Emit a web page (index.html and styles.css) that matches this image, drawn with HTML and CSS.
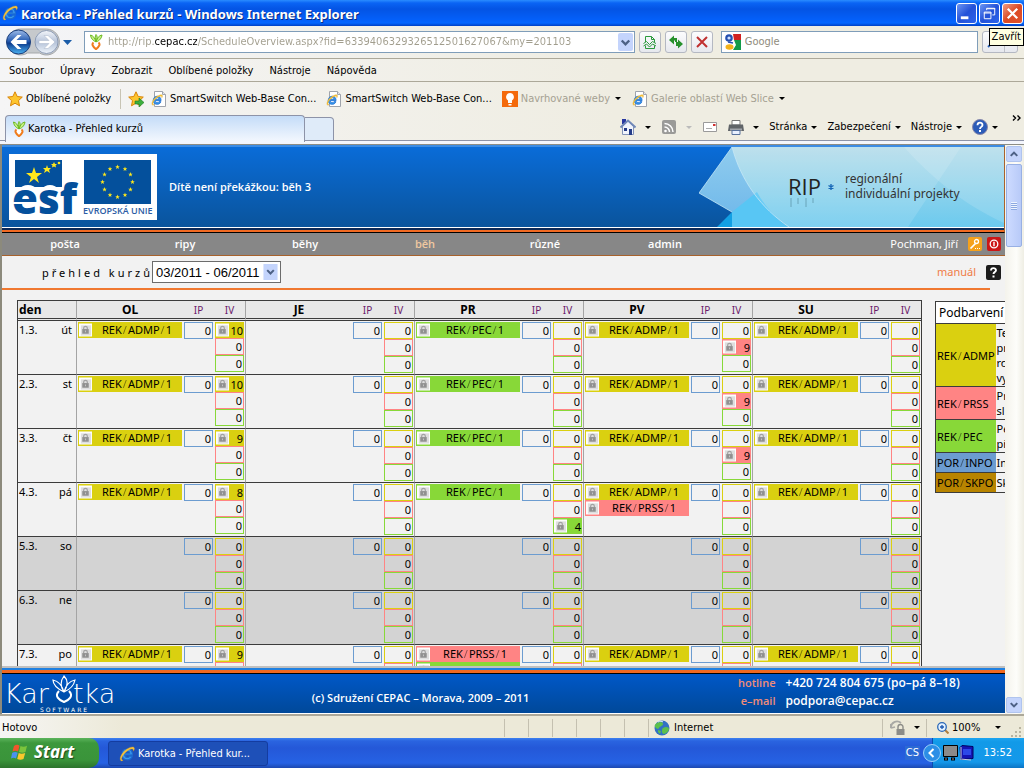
FILE: index.html
```html
<!DOCTYPE html>
<html lang="cs">
<head>
<meta charset="utf-8">
<title>Karotka - Přehled kurzů</title>
<link rel="stylesheet" href="styles.css">
</head>
<body>
<svg class="defs" aria-hidden="true">
  <defs>
    <linearGradient id="gBack" x1="0" y1="0" x2="0" y2="1"><stop offset="0" stop-color="#9dbbe8"/><stop offset=".45" stop-color="#2a5fb4"/><stop offset=".55" stop-color="#0d3c8e"/><stop offset="1" stop-color="#4cb4f4"/></linearGradient>
    <linearGradient id="gFwd" x1="0" y1="0" x2="0" y2="1"><stop offset="0" stop-color="#f4f6fa"/><stop offset=".5" stop-color="#b4c2d8"/><stop offset="1" stop-color="#eef4fb"/></linearGradient>
    <symbol id="ie" viewBox="0 0 16 16"><path d="M13.4 8.9H5.6c.2 1.700 1.300 2.600 2.800 2.600 1 0 1.800-.4 2.300-1.300h2.500c-.8 2.300-2.500 3.500-4.900 3.500-3.100 0-5.300-2-5.300-5.200C3 5.200 5.200 3 8.300 3c3.200 0 5.300 2.200 5.100 5.900zM5.700 7.200h5.100C10.700 5.800 9.700 5 8.300 5S5.900 5.800 5.700 7.200z" fill="#3a9cf0" stroke="#1c6cd0" stroke-width="1.100"/><path d="M2.200 15C-.6 13.200 2.600 6.500 8 3c3.500-2.300 7-2.900 7.400-.8.2 1-.5 2.300-1 3 .1-1.400-.3-2.200-1.700-2.200C9.500 3 3.600 8.600 2.700 12c-.3 1.500.3 2 1.500 1.900-.6.700-1.400 1.300-2 1.100z" fill="#f6c23c" stroke="#d8a020" stroke-width=".3"/></symbol>
    <symbol id="iepage" viewBox="0 0 16 16"><path d="M3.500.5h8l3 3v12h-11z" fill="#fff" stroke="#a0a4ac"/><path d="M11.500.5v3h3" fill="#e4e6ea" stroke="#a0a4ac"/><use href="#ie" x="0" y="3" width="12" height="12"/></symbol>
    <symbol id="carrot" viewBox="0 0 16 16"><path d="M8 8C4 6 3 4 2.500 1 5 1.500 7 4 8 8 7 4 7 2 8 .5 9.500 2 9.500 4 8 8c1-4 3-6.500 6-7-.5 3-2 5.500-6 7z" fill="#c8f088" stroke="#6cba22"/><path d="M5.500 8.500C3.500 10 4.500 12.500 8 15.200c3.500-2.700 4.500-5 2.500-6.700" fill="#fff" stroke="#f07c1c" stroke-width="2"/></symbol>
    <symbol id="star" viewBox="0 0 16 16"><path d="M8 .8l2.200 4.700 5.100.6-3.800 3.500 1 5.200L8 12.200l-4.500 2.600 1-5.200L.7 6.100l5.100-.6z" fill="#fdc52e" stroke="#d98408"/></symbol>
    <symbol id="lock" viewBox="0 0 14 14"><path fill="#fdfdfd" d="M0 0h14v14H0z"/><path fill="#dedede" d="M2 2h11v11H2z"/><path d="M5 6.500V5a2 2 0 0 1 4 0v1.500" fill="none" stroke="#a2a2a2" stroke-width="1.300"/><path fill="#909090" d="M3.500 6h7v5h-7z"/><path fill="#c8c8c8" d="M6.500 7.500h1v2h-1z"/></symbol>
  </defs>
</svg>

<header class="titlebar">
  <svg class="i16"><use href="#ie"/></svg>
  <h1>Karotka - Přehled kurzů - Windows Internet Explorer</h1>
  <button class="win" aria-label="Minimalizovat"><svg viewBox="0 0 20 20"><path fill="#fff" d="M4 13h8v3H4z"/></svg></button>
  <button class="win" aria-label="Obnovit"><svg viewBox="0 0 20 20" fill="none" stroke="#fff"><path d="M7 6.500V4.500h8.500v7H13M7 5h9"/><path d="M4.500 8.500h7v7h-7zM4 9.500h8"/></svg></button>
  <button class="win close" aria-label="Zavřít"><svg viewBox="0 0 20 20" stroke="#fff" stroke-width="2.400"><path d="M5 5l10 10M15 5L5 15"/></svg></button>
  <div class="tooltip" role="tooltip">Zavřít</div>
</header>

<div class="navbar">
  <svg class="backfwd" viewBox="0 0 76 30" role="img" aria-label="Zpět a vpřed">
    <path d="M17 2h26a13 13 0 1 1-7 24H24A13 13 0 1 1 17 2z" fill="#c6c9cc" stroke="#a5a8ab"/>
    <circle cx="15" cy="15" r="12" fill="url(#gBack)" stroke="#1c3f7c"/><path d="M7 15l7-7h4l-5 5h10v4H13l5 5h-4z" fill="#fff"/>
    <circle cx="43" cy="15" r="11.500" fill="url(#gFwd)" stroke="#8c9bb4"/><path d="M51.500 15l-7-6.500h-4l5 5h-10v3h10l-5 5h4z" fill="#fff" stroke="#a9b5c8" stroke-width=".5"/>
    <path d="M59.500 13h9L64 18z" fill="#1a5ca8"/>
  </svg>
  <div class="address">
    <svg class="i16"><use href="#carrot"/></svg>
    <input type="text" class="url" aria-label="Adresa" value="http://rip.cepac.cz/ScheduleOverview.aspx?fid=6339406329326512501627067&amp;my=201103">
    <button class="drop" aria-label="Rozbalit"><svg viewBox="0 0 14 18"><path d="M3.500 7L7 10.500 10.500 7" fill="none" stroke="#4d6185" stroke-width="2.200"/></svg></button>
  </div>
  <button class="tool" aria-label="Kompatibilní zobrazení"><svg viewBox="0 0 20 20" fill="none" stroke="#2b9a3c"><path d="M5.500 10V4.500h6l3 3V10M11.500 4.500v3h3M5.500 13.500v3h9v-3"/><path d="M3.500 11.500l3-2 3 3 3-3 3.500 2M3.500 14l3-2 3 3 3-3 3.500 2"/></svg></button>
  <button class="tool" aria-label="Obnovit"><svg viewBox="0 0 20 20" fill="#27912d"><path d="M3 8l5-4.500V6h3v4H9V8.500H8v4zM17 12l-5-4.500V10h-2v4h2v2.500z"/></svg></button>
  <button class="tool" aria-label="Zastavit"><svg viewBox="0 0 20 20" stroke="#c03030" stroke-width="2"><path d="M5 5l10 10M15 5L5 15"/></svg></button>
  <div class="search">
    <svg class="i16" viewBox="0 0 16 16"><path fill="#fff" d="M0 0h16v16H0z"/><path fill="#d02020" d="M8 0h8v6H9z"/><path fill="#129a48" d="M9 6h7v10H8l3-5z"/><circle cx="4" cy="4" r="3.800" fill="#2550b0"/><circle cx="4" cy="4" r="1.600" fill="#cfe0ff"/><ellipse cx="4.500" cy="13" rx="4" ry="2.800" fill="#f3b21a"/><path d="M3 8l5 1" stroke="#2550b0" stroke-width="1.500"/></svg>
    <input type="text" aria-label="Hledat" placeholder="Google">
  </div>
  <button class="tool find" aria-label="Hledat"><svg viewBox="0 0 34 20"><path d="M5 15l5-5" stroke="#2b62b8" stroke-width="2"/><path d="M21.500 0v20" stroke="#bfc2c8"/></svg></button>
</div>

<nav class="menubar">
  <button>Soubor</button><button>Úpravy</button><button>Zobrazit</button><button>Oblíbené položky</button><button>Nástroje</button><button>Nápověda</button>
</nav>

<div class="favbar">
  <button class="fav first"><svg class="i16"><use href="#star"/></svg>Oblíbené položky</button>
  <span class="sep"></span>
  <button class="fav add" aria-label="Přidat"><svg class="i16" viewBox="0 0 16 16"><use href="#star"/><path d="M7 10h4V7l5 4.500-5 4.500v-3H7z" fill="#3cae3c" stroke="#1d7a22" stroke-width=".6"/></svg></button>
  <button class="fav sw"><svg class="i16"><use href="#iepage"/></svg>SmartSwitch Web-Base Con...</button>
  <button class="fav sw"><svg class="i16"><use href="#iepage"/></svg>SmartSwitch Web-Base Con...</button>
  <button class="fav dim nav1"><svg class="i16" viewBox="0 0 16 16"><path fill="#f46a0c" d="M0 0h16v16H0z"/><path d="M8 2a4 4 0 0 1 2 7.400V12H6V9.400A4 4 0 0 1 8 2zM6.500 13h3v1.500h-3z" fill="#fff"/></svg>Navrhované weby<i class="caret"></i></button>
  <button class="fav dim"><svg class="i16"><use href="#iepage"/></svg>Galerie oblastí Web Slice<i class="caret"></i></button>
</div>

<div class="tabbar">
  <button class="tab"><svg class="i16"><use href="#carrot"/></svg>Karotka - Přehled kurzů</button>
  <button class="newtab" aria-label="Nová karta"></button>
  <div class="cmds">
    <button class="cmd" aria-label="Domů"><svg class="i16" viewBox="0 0 16 16"><path fill="#2838a0" d="M2 0h4v5H2z"/><path d="M2.500 7.500v8h11v-8L8 2z" fill="#f0f4fc" stroke="#8494b8"/><path d="M.5 8.500L8 1.500l7.500 7" fill="none" stroke="#7088b8" stroke-width="2"/><path fill="#243c88" d="M9 10h3v6H9zM4 9h3v3H4z"/></svg><i class="caret"></i></button>
    <button class="cmd" aria-label="Kanály"><svg class="i16" viewBox="0 0 16 16"><rect x="1" y="1" width="14" height="14" rx="2" fill="#9a9a98"/><path d="M3.500 8a5 5 0 0 1 5 5M3.500 4.500A8.500 8.500 0 0 1 12 13" fill="none" stroke="#fff" stroke-width="1.500"/><circle cx="4.500" cy="12" r="1.300" fill="#fff"/></svg><i class="caret off"></i></button>
    <button class="cmd mail" aria-label="Pošta"><svg class="i16" viewBox="0 0 16 16"><path d="M1.500 3.500h13v9h-13z" fill="#fff" stroke="#9a9a9a"/><path fill="#d03030" d="M11 5h2.500v2H11z"/><path d="M4 9.500h6" stroke="#aaa"/></svg></button>
    <button class="cmd" aria-label="Tisk"><svg class="i16" viewBox="0 0 16 16"><path fill="#fff" stroke="#777" d="M4 1.500h8V6H4z"/><path fill="#606468" d="M1 5.500h14L16 12H0z"/><path fill="#a0a4aa" d="M2 9.500h12v2H2z"/><path fill="#e8f0ff" stroke="#58729c" d="M4 11.500h8v4H4z"/></svg><i class="caret"></i></button>
    <button class="cmd">Stránka<i class="caret"></i></button>
    <button class="cmd">Zabezpečení<i class="caret"></i></button>
    <button class="cmd">Nástroje<i class="caret"></i></button>
    <button class="cmd help" aria-label="Nápověda"><svg class="i16" viewBox="0 0 16 16"><circle cx="8" cy="8" r="7.500" fill="#2c5cb8" stroke="#88a"/><path d="M5.500 6.200c0-3.400 5-3.200 5-.3C10.500 8 8 7.800 8 10" fill="none" stroke="#fff" stroke-width="1.800"/><path fill="#fff" d="M7 11h2v2H7z"/></svg><i class="caret"></i></button>
    <button class="more" aria-label="Další"><svg viewBox="0 0 10 6" fill="none" stroke="#000" stroke-width="1.400"><path d="M1 .5L3.500 3 1 5.500M5.500.5L8 3 5.500 5.500"/></svg></button>
  </div>
</div>

<main class="view">
  <div class="page">
    <div class="banner">
      <svg class="esf" viewBox="0 0 148 66" role="img" aria-label="ESF, Evropská unie">
        <path fill="#fff" d="M0 0h148v66H0z"/>
        <path fill="#04509c" d="M6 6h47v27H6z"/>
        <ellipse cx="19" cy="47" rx="14" ry="16" fill="#fff"/><ellipse cx="41" cy="47" rx="13" ry="16" fill="#fff"/>
        <text x="3" y="60" class="esf-t">esf</text>
        <path fill="#fff" d="M4 48h28v2H4z"/>
        <g fill="#ffe81c"><path d="M25 13l2 6h6l-5 4 2 6-5-4-5 4 2-6-5-4h6z"/><path d="M38 11l1 3h3l-2 2 1 3-3-2-3 2 1-3-2-2h3z"/><path d="M45 8l1 2h2l-1.500 1.500.5 2-2-1-2 1 .5-2L42 10h2z"/><circle cx="50" cy="9" r="1.300"/></g>
        <path fill="#04509c" d="M75 6h67v44H75z"/>
        <g fill="#ffe81c" id="eu"></g>
        <text x="74" y="60" class="eu-t">EVROPSKÁ UNIE</text>
      </svg>
      <strong>Dítě není překážkou: běh 3</strong>
      <svg class="rip" viewBox="0 0 305 80">
        <defs><linearGradient id="gr" x1="0" y1="0" x2="0" y2="1"><stop offset="0" stop-color="#b4dcea"/><stop offset="1" stop-color="#6ccaee"/></linearGradient><linearGradient id="gl" x1="0" y1="0" x2="0" y2="1"><stop offset="0" stop-color="#90ccee"/><stop offset="1" stop-color="#6cb6ea"/></linearGradient></defs>
        <path fill="url(#gr)" d="M33 0h272v80H33z"/>
        <path fill="url(#gl)" d="M33 0C42 34 62 61 90 80H33V65L0 46z"/>
        <path fill="#58c6f4" d="M33 65l25-20C66 60 78 72 90 80H33z"/><path fill="#12a0e4" d="M33 65v15H18z"/>
        <path d="M33 65L0 46 33 0c9 34 29 61 57 80" fill="none" stroke="#c2e6f6" stroke-width=".8"/>
        <path fill="#fff" opacity=".13" d="M205 0h57l-53 80H90C62 61 42 34 33 0z"/><path fill="#fff" opacity=".14" d="M205 0h100v76C265 58 232 30 205 0z"/>
        <text x="89" y="48" class="rip-t">RIP</text>
        <path d="M92 51v9M99 51v6M107 51v9M114 51v5" stroke="#386878" opacity=".45"/>
        <path d="M132 37v6M129.500 38.500l5 3M134.500 38.500l-5 3" stroke="#1868b8" stroke-width="1.400"/>
        <text x="146" y="36" class="rip-s">regionální</text><text x="146" y="51" class="rip-s">individuální projekty</text>
      </svg>
    </div>
    <nav class="sitenav">
      <a href="#">pošta</a><a href="#">ripy</a><a href="#">běhy</a><a href="#" class="on">běh</a><a href="#">různé</a><a href="#">admin</a>
      <span class="user">Pochman, Jiří</span>
      <button class="ico" aria-label="Změnit heslo"><svg viewBox="0 0 14 14"><rect width="14" height="14" rx="2" fill="#f5a11c"/><path d="M2.500 11.500L8 6" stroke="#fff" stroke-width="1.700"/><circle cx="8.500" cy="4.500" r="2" fill="none" stroke="#fff" stroke-width="1.300"/><path d="M7 11.500h5" stroke="#fff" stroke-dasharray="1 1"/></svg></button>
      <button class="ico" aria-label="Odhlásit"><svg viewBox="0 0 14 14"><rect width="14" height="14" rx="2" fill="#cc1616"/><circle cx="7" cy="7" r="3.800" fill="none" stroke="#fff" stroke-width="1.300"/><path d="M7 4.800v4.400" stroke="#fff" stroke-width="1.400"/></svg></button>
    </nav>
    <div class="subbar">
      <label for="period">přehled kurzů</label>
      <span class="pick"><select id="period"><option>03/2011 - 06/2011</option></select><svg viewBox="0 0 15 17"><path fill="#c4d4fc" d="M0 0h15v17H0z"/><path d="M4 6.500L7.500 10 11 6.500" fill="none" stroke="#4d6185" stroke-width="2.200"/></svg></span>
      <a href="#">manuál</a>
      <svg class="q" viewBox="0 0 15 15"><rect width="15" height="15" rx="2" fill="#1c1c1c"/><path d="M5 5.500c0-3.200 5-3 5-.3C10 7 7.500 7 7.500 9" fill="none" stroke="#fff" stroke-width="1.900"/><path fill="#fff" d="M6.500 10.500h2v2h-2z"/></svg>
    </div>
    <div class="content">
      <table class="plan">
        <colgroup><col class="c-day"><col class="c-name"></colgroup>
        <thead><tr id="head"><th colspan="2" class="den">den</th></tr></thead>
        <tbody id="days"></tbody>
      </table>
      <table class="legend">
        <colgroup><col class="c-code"><col></colgroup>
        <tr><th colspan="2">Podbarvení</th></tr>
        <tr><td class="y">REK<s>/</s>ADMP</td><td>Te<br>pr<br>ro<br>vy</td></tr>
        <tr><td class="r">REK<s>/</s>PRSS</td><td>Pr<br>sl</td></tr>
        <tr><td class="g">REK<s>/</s>PEC</td><td>Pe<br>př</td></tr>
        <tr><td class="b">POR<s>/</s>INPO</td><td>In</td></tr>
        <tr><td class="o">POR<s>/</s>SKPO</td><td>Sk</td></tr>
      </table>
    </div>
    <footer class="foot">
      <svg class="karotka" viewBox="0 0 112 40" role="img" aria-label="Karotka Software">
        <g fill="none" stroke="#fff" stroke-width="1.200"><path d="M60 18C52 14 49 10 49 6c5 1 9 5 11 12-4-6-3-12 0-16 4 4 4 10 0 16 2-8 6-11 11-12-1 5-4 9-11 12z"/><path d="M55 17c-5 5 0 9 5 11 5-2 10-6 5-11" stroke-width="2"/></g>
        <text x="0" y="29" class="k-t">Kar</text><text x="69" y="29" class="k-t">tka</text>
        <text x="36" y="38" class="k-s">S O F T W A R E</text>
      </svg>
      <span class="copy">(c) Sdružení CEPAC – Morava, 2009 – 2011</span>
      <dl><dt>hotline</dt><dd>+420 724 804 675 (po–pá 8–18)</dd><dt>e–mail</dt><dd>podpora@cepac.cz</dd></dl>
    </footer>
  </div>
  <div class="scroll">
    <button aria-label="Nahoru"><svg viewBox="0 0 15 15"><path d="M4 9.500L7.500 6 11 9.500" fill="none" stroke="#4d6185" stroke-width="2.200"/></svg></button>
    <div class="thumb"><i></i></div>
    <button class="down" aria-label="Dolů"><svg viewBox="0 0 15 15"><path d="M4 5.500L7.500 9 11 5.500" fill="none" stroke="#4d6185" stroke-width="2.200"/></svg></button>
  </div>
</main>

<div class="status">
  <span class="msg">Hotovo</span>
  <span class="cell"></span><span class="cell"></span><span class="cell"></span><span class="cell"></span><span class="cell"></span><span class="cell"></span>
  <span class="zone"><svg class="i16" viewBox="0 0 16 16"><circle cx="8" cy="8" r="7.500" fill="#3272c4"/><path d="M3 3c3-2 6-1 6 1S6 6 5 8 2 8 1 7s0-3 2-4zM9 8c3-2 6-1 6 1s-3 5-5 5-3-4-1-6zM4 10l3 1-1 3-2-2z" fill="#5cc04c"/><path d="M4 2c2-1 4-1 5 0" stroke="#e4f4ff" fill="none"/></svg>Internet</span>
  <span class="prot"><svg class="i16" viewBox="0 0 16 16"><path d="M1 8a6 6 0 0 1 10-5M1 8l-1-4M1 8l4-1" fill="none" stroke="#a8a8a4" stroke-width="1.800"/><path d="M8 9V7a2.500 2.500 0 0 1 5 0v2" fill="none" stroke="#8c8c88" stroke-width="1.400"/><path fill="#8c8c88" d="M6.500 9h8v6h-8z"/></svg><i class="caret"></i></span>
  <span class="zoom"><svg class="i12" viewBox="0 0 12 12"><path d="M8 8l3.500 3.500" stroke="#b08040" stroke-width="2"/><circle cx="5" cy="5" r="4.300" fill="#e4f2ff" stroke="#2a68b8" stroke-width="1.300"/><path d="M5 3v4M3 5h4" stroke="#1c58b0" stroke-width="1.300"/></svg>100%<i class="caret"></i></span>
  <svg class="grip" viewBox="0 0 12 12" fill="#b8b4a0"><path d="M9 1h2v2H9zM5 5h2v2H5zM9 5h2v2H9zM1 9h2v2H1zM5 9h2v2H5zM9 9h2v2H9z"/></svg>
</div>

<footer class="taskbar">
  <button class="start"><svg viewBox="0 0 18 18"><path d="M3 3c2-1.500 4-1.500 5.500-.3L7 8.500C5.500 7.500 3.500 7.500 1.500 8.500z" fill="#f0562c"/><path d="M9.500 3c2 1 4 1 6.500-.2L14.500 9c-2 1-4 1-6.500 0z" fill="#7cc43c"/><path d="M1.200 9.700C3.200 8.700 5.200 8.700 6.700 9.700L5 15.500C3.500 14.500 1.500 14.500 0 15.500z" fill="#4a92ee"/><path d="M7.700 10c2 1 4 1 6.500 0l-1.700 6c-2 1-4 1-6.300 0z" fill="#fbc82c"/></svg>Start</button>
  <button class="task"><svg class="i16"><use href="#ie"/></svg>Karotka - Přehled kur...</button>
  <span class="lang">CS</span>
  <div class="tray">
    <svg class="hide" viewBox="0 0 18 18"><circle cx="9" cy="9" r="8.500" fill="#2c8ee6" stroke="#9cd0f8"/><path d="M10.500 5L6.500 9l4 4" fill="none" stroke="#fff" stroke-width="2"/></svg>
    <svg class="i16" viewBox="0 0 16 16"><path fill="#8a8a8a" stroke="#000" d="M1.500.5h14v11h-14z"/><path d="M2 14h4M9 14h4" stroke="#000" stroke-width="3"/><path d="M3 14h2M10 14h2" stroke="#999"/></svg>
    <svg class="i16" viewBox="0 0 16 16"><path fill="#1414b4" stroke="#000060" d="M3 .5l11 1v12l-12 1-1-12z"/><path fill="#2c48e8" d="M4 4h8v6H4z"/><path d="M1 14l11 1M2 2v11" stroke="#ccd"/></svg>
    <time>13:52</time>
  </div>
</footer>
<script src="plan.js"></script>
</body>
</html>
```
FILE: styles.css
```css
* { box-sizing: border-box; }
html, body { height: 100%; }
body { margin: 0; display: flex; flex-direction: column; overflow: hidden; background: #f1efe4; color: #000; font: 11px/14px "DejaVu Sans Condensed", "Noto Sans", sans-serif; }
button { font: inherit; color: inherit; border: 0; padding: 0; margin: 0; background: none; white-space: nowrap; }
input, select { font: inherit; }
svg { display: block; flex: none; }
.defs { position: absolute; width: 0; height: 0; }
.i16 { width: 16px; height: 16px; }
.i12 { width: 12px; height: 12px; }
.caret { display: inline-block; border: 3px solid transparent; border-top-color: #000; border-bottom: 0; }
.caret.off { border-top-color: #bbb; }

.titlebar { position: relative; z-index: 2; flex: none; height: 26px; display: flex; align-items: center; gap: 2px; padding: 0 1px 0 2px; background: linear-gradient(#2a8cff 0, #0a64f4 3px, #0454e4 9px, #0460fa 20px, #0466ff 23px, #0040c4 26px); }
.titlebar h1 { flex: 1; margin: 0; padding: 1px 0 0 1px; color: #fff; font: bold 13px/16px "Noto Sans", sans-serif; text-shadow: 1px 1px 0 #0a2c80; white-space: nowrap; }
.win { width: 21px; height: 21px; border: 1px solid #fff; border-radius: 3px; background: linear-gradient(135deg, #6c96f4, #2452d8 50%, #2c64ec); }
.win.close { background: linear-gradient(135deg, #f09c84, #dc4a24 50%, #e0522c); }
.tooltip { position: absolute; right: 0; top: 28px; padding: 1px 2px; border: 1px solid #000; background: #ffffe1; }

.navbar { flex: none; height: 33px; display: flex; align-items: center; gap: 4px; padding: 0 6px 0 3px; background: linear-gradient(90deg, #f4f5f8, #efede2 60%); border-bottom: 1px solid #aca899; }
.backfwd { width: 77px; height: 30px; }
.address, .search { display: flex; align-items: center; gap: 4px; height: 22px; border: 1px solid #7f9db9; background: #fff; padding: 0 1px 0 3px; }
.address { flex: 555; min-width: 0; }
.search { flex: 256; min-width: 0; margin-left: 4px; }
.address input, .search input { flex: 1; min-width: 0; border: 0; padding: 0; outline: 0; color: #8f8b7c; background: none; font-family: "DejaVu Sans Condensed", sans-serif; }
.address .url { color: transparent; background: linear-gradient(90deg, #a19d8d 46px, #000 46px, #000 89px, #a19d8d 89px); -webkit-background-clip: text; background-clip: text; }
.search input::placeholder { color: #8f8b7c; }
.drop { width: 15px; height: 18px; background: #c4d4fc; border-radius: 2px; }
.tool { width: 22px; height: 22px; border: 1px solid #b4b8c2; border-radius: 3px; background: linear-gradient(#fcfcfd, #e6e8ee); }
.find { width: 36px; }

.menubar { flex: none; height: 23px; display: flex; align-items: center; gap: 16px; padding: 2px 0 0 9px; background: linear-gradient(90deg, #f5f5f6, #efede2 60%); border-bottom: 1px solid #aca899; }
.favbar { flex: none; height: 33px; display: flex; align-items: center; padding-left: 7px; background: linear-gradient(90deg, #f5f5f6, #efede2 60%); }
.fav { display: flex; align-items: center; gap: 3px; }
.fav .caret { margin-left: 2px; }
.fav.dim { color: #a5a192; }
.sep { width: 1px; height: 20px; margin: 0 7px 0 9px; background: #c8c4b4; }
.add { margin-right: 7px; }
.sw { margin-right: 10px; }
.nav1 { margin-right: 11px; }

.tabbar { flex: none; height: 30px; display: flex; align-items: flex-start; background: linear-gradient(transparent 25px, #8d93a8 25px, #8d93a8 26px, #f4f6fc 26px, #f4f6fc 29px, #8c8c84 29px), linear-gradient(90deg, #f5f5f6, #efede2 60%); }
.tab { flex: 0 1 300px; height: 27px; margin-left: 5px; padding: 0 5px; display: flex; align-items: center; gap: 1px; border: 1px solid #8d93a8; border-bottom: 0; border-radius: 4px 4px 0 0; background: linear-gradient(#c4dcf8, #f4f8fe); }
.newtab { width: 29px; height: 24px; margin-top: 2px; border: 1px solid #8d93a8; border-left: 0; border-radius: 0 4px 0 0; background: #dfebf9; }
.cmds { margin-left: auto; display: flex; align-items: center; gap: 10px; height: 24px; padding-right: 2px; }
.cmd { display: flex; align-items: center; gap: 4px; }
.cmd .i16 + .caret { margin-left: 5px; }
.cmd.help .caret { margin-left: 0; }
.more { align-self: flex-start; margin-left: 4px; }
.more svg { width: 10px; height: 6px; }

.view { flex: 1; min-height: 0; display: flex; border-left: 2px solid #8c8a7c; }
.page { flex: 1; min-width: 0; display: flex; flex-direction: column; overflow: hidden; background: #f2f2f2; font: 11px/16px "Noto Sans", sans-serif; }
.banner { flex: none; height: 88px; display: flex; align-items: flex-start; color: #fff; border-top: 2px solid #3c8ce4; border-bottom: 1px solid #000; background: linear-gradient(#0a6cd8 0, #0a549c 80px, #fff 80px, #fff 81px, #0c2a58 81px, #0c2a58 83px, #f26a22 83px); border-right: 1px solid #a8622c; }
.esf { width: 148px; height: 66px; margin: 7px 12px 0 7px; }
.banner strong { margin-top: 32px; font: 600 11px/16px "Open Sans", sans-serif; white-space: nowrap; }
.rip { width: 305px; height: 80px; margin-left: auto; }
.esf-t { font: 800 42px "Open Sans", sans-serif; fill: #04509c; }
.eu-t { font: 600 9px "Open Sans", sans-serif; fill: #2c5ca4; }
.rip-t { font: 22px "Open Sans", sans-serif; fill: #222; }
.rip-s { font: 12px "Noto Sans", sans-serif; fill: #333; }
.sitenav { flex: none; height: 23px; display: flex; align-items: center; padding: 0 4px 0 3px; background: #878787; border-bottom: 1px solid #a8622c; color: #fff; }
.sitenav a { flex: 0 1 120px; text-align: center; color: #fff; text-decoration: none; font-family: "Open Sans", sans-serif; font-weight: 600; }
.sitenav .on { color: #f0c8a0; }
.user { margin-left: auto; margin-right: 10px; white-space: nowrap; }
.ico { width: 14px; height: 14px; }
.ico + .ico { margin-left: 5px; }
.subbar { flex: none; height: 34px; display: flex; align-items: center; margin-right: 15px; padding: 0 0 0 40px; border-bottom: 2px solid #f07830; }
.subbar label { padding-top: 2px; letter-spacing: 3px; white-space: nowrap; }
.pick { position: relative; width: 129px; height: 22px; margin-left: -1px; }
.pick select { width: 100%; height: 100%; appearance: none; border: 1px solid #6c6c6c; background: #fff; padding: 0 3px; font: 13px "Liberation Sans", Arial, sans-serif; color: #000; }
.pick svg { position: absolute; right: 3px; top: 3px; width: 15px; height: 16px; pointer-events: none; }
.subbar a { margin-left: auto; color: #f07c46; text-decoration: none; }
.q { width: 15px; height: 15px; margin: 0 -11px 0 10px; }

.content { flex: 1; min-height: 0; overflow: hidden; display: flex; align-items: flex-start; gap: 13px; padding: 10px 0 0 15px; }
.plan { flex: none; table-layout: fixed; width: 905px; border-collapse: separate; border-spacing: 0; border: 1px solid #3c3c3c; border-bottom: 0; }
.c-day { width: 34px; }
.c-name { width: 24px; }
.c-les { width: 107px; }
.c-num { width: 31px; }
.plan th { height: 20px; padding: 0; background: #e8e8e8; border-bottom: 3px double #3c3c3c; font-size: 12px; font-weight: 700; line-height: 16px; }
.plan th.den { text-align: left; padding-left: 1px; }
.plan th.loc, .plan td.loc { border-left: 1px solid #a4a4a4; }
.plan th.sub { color: #6a1a6a; font-weight: 400; font-size: 10px; }
.plan td { height: 54px; padding: 1px 0 0; vertical-align: top; border-top: 1px solid #3c3c3c; font-size: 11px; }
.plan tbody tr:first-child td { height: 53px; border-top: 0; }
.plan tr.we td { background: #d3d3d3; }
.plan td.date { padding-left: 1px; }
.plan td.name { text-align: right; padding-right: 4px; }
.plan td.loc { padding-left: 1px; padding-right: 1px; }
.plan td.num { padding-left: 1px; padding-right: 1px; }
.les { display: flex; align-items: center; height: 16px; padding-left: 1px; }
.les svg, .box svg { width: 13px; height: 14px; }
.les span { flex: 1; text-align: center; }
s { text-decoration: none; opacity: .45; padding: 0 1px; }
.box { display: flex; align-items: center; justify-content: flex-end; height: 17px; padding-right: 1px; border: 1px solid; border-color: var(--c); line-height: 15px; }
.box.full { height: 16px; justify-content: space-between; background: var(--c); border-right: 0; }
.y { background: #dad010; --c: #dad010; }
.r { background: #ff8484; --c: #ff8484; }
.g { background: #88d838; --c: #88d838; }
.b { background: #6c9cd0; --c: #6c9cd0; }
.o { background: #b88400; }
.box:not(.full) { background: none; }

.legend { flex: none; margin-top: 1px; border-collapse: collapse; table-layout: fixed; width: 220px; }
.c-code { width: 60px; }
.legend th { height: 22px; padding: 0 3px; text-align: left; background: #fff; font-size: 12px; font-weight: 400; }
.legend th, .legend tr { border: 1px solid #3c3c3c; }
.legend td { padding: 1px 1px; line-height: 15px; vertical-align: middle; height: 20px; }

.foot { flex: none; height: 48px; display: flex; align-items: flex-start; padding-top: 8px; color: #fff; background: linear-gradient(#c0c0c0 0, #c0c0c0 2px, #2080e0 2px, #2080e0 4px, #f06820 4px, #f06820 7px, #000 7px, #000 8px, #0058c8 8px, #004898 48px); border-bottom: 1px solid #fff; }
.karotka { width: 112px; height: 40px; margin-left: 2px; }
.k-t { font: 200 27px "DejaVu Sans", sans-serif; fill: #fff; }
.k-s { font: 6px "DejaVu Sans", sans-serif; fill: #fff; }
.copy { flex: 1; text-align: center; margin: 16px 0 0; padding: 0 120px 0 107px; font: 600 11px/16px "Open Sans", sans-serif; white-space: nowrap; }
.foot dl { margin: 1px 0 0; width: 267px; display: grid; grid-template-columns: auto 1fr; column-gap: 10px; row-gap: 2px; font: 600 12px/16px "Open Sans", sans-serif; white-space: nowrap; }
.foot dt { text-align: right; color: #f08c78; font-size: 11px; }
.foot dd { margin: 0; }

.scroll { flex: none; width: 19px; display: flex; flex-direction: column; gap: 2px; padding: 1px 2px 1px 1px; background: linear-gradient(90deg, #f4f3ec, #fdfdfa 60%, #efeee4); }
.scroll button { width: 16px; height: 16px; border: 1px solid #b0c4ee; border-radius: 2px; background: #c4d4fc; }
.scroll .down { margin-top: auto; }
.thumb { height: 83px; width: 16px; border: 1px solid #98b0e4; border-radius: 2px; background: linear-gradient(90deg, #cddbff, #b8caf8); display: flex; align-items: center; justify-content: center; }
.thumb i { width: 6px; height: 8px; background: repeating-linear-gradient(#eef4fe 0 1px, #8ca8e0 1px 2px); }

.status { flex: none; height: 24px; display: flex; align-items: center; padding: 1px 2px 0; border-top: 2px solid #aca899; background: linear-gradient(90deg, #f6f6f4, #ece9d8 12%); white-space: nowrap; }
.msg { flex: 1; }
.cell { width: 24px; height: 18px; border-left: 1px solid #c4c0b0; }
.zone { display: flex; align-items: center; gap: 4px; width: 234px; height: 18px; padding-left: 5px; border-left: 1px solid #c4c0b0; }
.prot { display: flex; align-items: center; gap: 8px; width: 44px; height: 18px; padding-left: 7px; border-left: 1px solid #c4c0b0; }
.zoom { display: flex; align-items: center; gap: 3px; width: 84px; height: 18px; padding-left: 10px; border-left: 1px solid #c4c0b0; }
.zoom .caret { margin-left: 12px; }
.grip { width: 12px; height: 12px; align-self: flex-end; }

.taskbar { flex: none; height: 30px; display: flex; align-items: center; color: #fff; background: linear-gradient(#3c80f0 0, #2a64e0 3px, #2458d8 10px, #2662e4 25px, #1c48b0 30px); }
.start { width: 99px; height: 30px; padding: 0 0 2px 11px; display: flex; align-items: center; gap: 5px; border-radius: 0 10px 10px 0; background: linear-gradient(#5cb45c 0, #3c983c 5px, #3a943a 22px, #2c742c 30px); font: italic bold 17px/20px "Noto Sans", sans-serif; text-shadow: 1px 1px 1px #1c481c; }
.start svg { width: 18px; height: 18px; }
.task { width: 160px; height: 25px; margin-left: 9px; padding: 2px 10px 0; display: flex; align-items: center; gap: 3px; border: 1px solid #143ca0; border-radius: 3px; background: #1e50b8; }
.lang { margin-left: auto; padding: 0 1px; background: #2c6ad4; }
.tray { height: 30px; width: 92px; margin-left: 12px; padding-right: 12px; display: flex; align-items: center; gap: 1px; border-left: 1px solid #0c4cae; background: linear-gradient(#1ca4f0 0, #129ae8 4px, #1498ea 24px, #0c74c4 30px); }
.hide { width: 18px; height: 18px; margin-left: -10px; }
.tray time { margin-left: auto; }
```
FILE: plan.js
```js
const places = ['OL', 'JE', 'PR', 'PV', 'SU'];
const lock = '<svg><use href="#lock"/></svg>';
const colour = { ADMP: 'y', PRSS: 'r', PEC: 'g' };

// lessons: one list per place; iv: [slot, count] of the filled individual slot
const usual = [['ADMP'], [], ['PEC'], ['ADMP'], ['ADMP']];
const days = [
  { date: '1.3.', name: 'út', lessons: usual, iv: { 0: [0, 10], 3: [1, 9] } },
  { date: '2.3.', name: 'st', lessons: usual, iv: { 0: [0, 10], 3: [1, 9] } },
  { date: '3.3.', name: 'čt', lessons: usual, iv: { 0: [0, 9], 3: [1, 9] } },
  { date: '4.3.', name: 'pá', lessons: [['ADMP'], [], ['PEC'], ['ADMP', 'PRSS'], ['ADMP']], iv: { 0: [0, 8], 2: [2, 4] } },
  { date: '5.3.', name: 'so', off: true },
  { date: '6.3.', name: 'ne', off: true },
  { date: '7.3.', name: 'po', lessons: [['ADMP'], [], ['PRSS', 'PEC'], ['ADMP'], ['ADMP']], iv: { 0: [0, 9] } }
];

const cols = document.querySelector('.plan colgroup');
const head = document.getElementById('head');
for (const p of places) {
  cols.innerHTML += '<col class="c-les"><col class="c-num"><col class="c-num">';
  head.innerHTML += `<th class="loc">${p}</th><th class="sub">IP</th><th class="sub">IV</th>`;
}

const lesson = k => `<div class="les ${colour[k]}">${lock}<span>REK<s>/</s>${k}<s>/</s>1</span></div>`;
const slots = filled => ['y', 'r', 'g'].map((c, i) =>
  filled && filled[0] === i
    ? `<div class="box full ${c}">${lock}<span>${filled[1]}</span></div>`
    : `<div class="box ${c}">0</div>`).join('');

document.getElementById('days').innerHTML = days.map(d =>
  `<tr class="${d.off ? 'we' : ''}"><td class="date">${d.date}</td><td class="name">${d.name}</td>` +
  places.map((p, i) =>
    `<td class="loc">${d.off ? '' : d.lessons[i].map(lesson).join('')}</td>` +
    `<td class="num"><div class="box b">0</div></td>` +
    `<td class="num">${slots(d.iv && d.iv[i])}</td>`).join('') + '</tr>').join('');

// ring of twelve stars on the flag
const eu = document.getElementById('eu');
for (let i = 0; i < 12; i++) {
  const a = i * Math.PI / 6;
  const pts = [];
  for (let j = 0; j < 10; j++) {
    const r = j % 2 ? 1 : 2.4;
    const b = -Math.PI / 2 + j * Math.PI / 5;
    pts.push((108.5 + 15 * Math.sin(a) + r * Math.cos(b)).toFixed(1) + ',' + (28 - 15 * Math.cos(a) + r * Math.sin(b)).toFixed(1));
  }
  eu.innerHTML += `<polygon points="${pts.join(' ')}"/>`;
}
```
